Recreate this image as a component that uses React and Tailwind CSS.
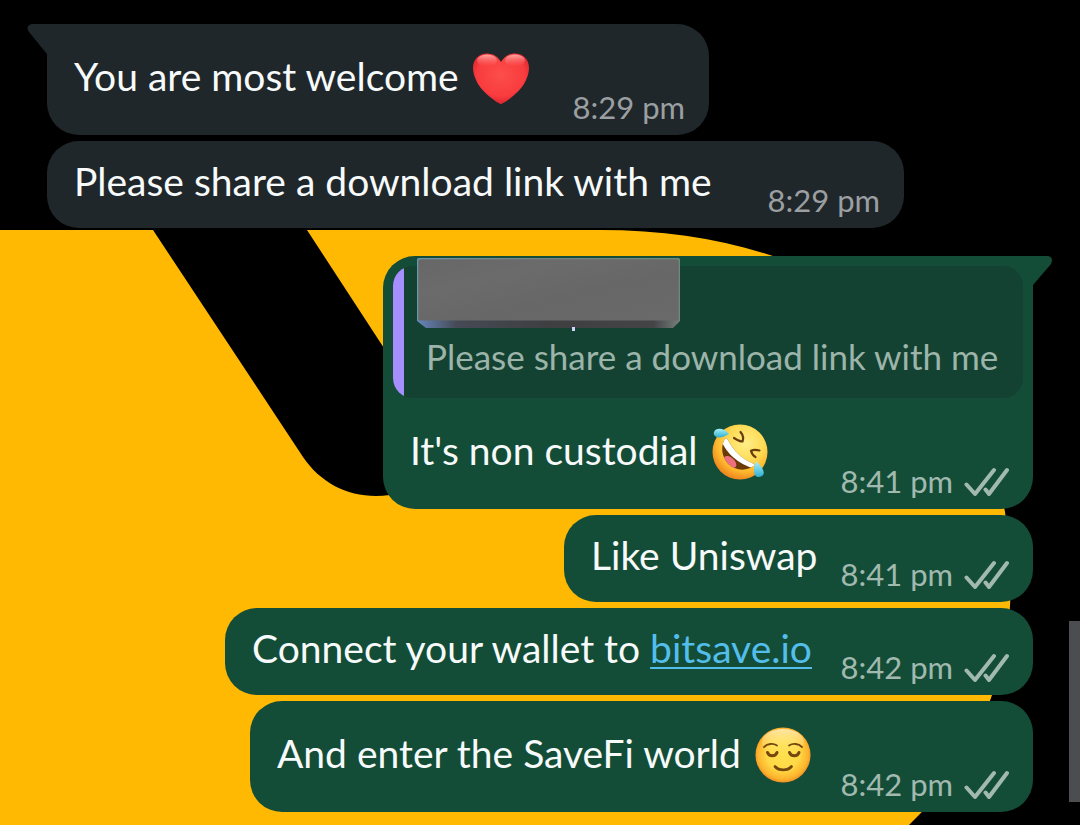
import React from "react";

const messages = [
  { id: 1, text: "You are most welcome", emoji: "heart", time: "8:29 pm", tail: true, width: "w-[662px]" },
  { id: 2, text: "Please share a download link with me", time: "8:29 pm", width: "w-[857px]" },
  {
    id: 3,
    mine: true,
    text: "It's non custodial",
    emoji: "rofl",
    time: "8:41 pm",
    tail: true,
    quote: "Please share a download link with me",
    width: "w-[650px]",
  },
  { id: 4, mine: true, text: "Like Uniswap", time: "8:41 pm", width: "w-[469px]" },
  { id: 5, mine: true, text: "Connect your wallet to", link: "bitsave.io", time: "8:42 pm", width: "w-[808px]" },
  { id: 6, mine: true, text: "And enter the SaveFi world", emoji: "relieved", time: "8:42 pm", width: "w-[783px]" },
];

function Wallpaper() {
  return (
    <svg
      className="absolute inset-0 h-full w-full"
      viewBox="0 0 1080 825"
      preserveAspectRatio="xMinYMin slice"
      aria-hidden="true"
    >
      <path
        fill="#ffb902"
        d="M0 230H153L303 457C320 482 346 496 376 496C420 496 450 470 440 434L307 230H600C665 230 722 239 776 257C900 300 985 400 1005 512C1010 545 1012 577 1010 606C1008 638 1002 668 991 698C975 742 953 783 909 825H0Z"
      />
    </svg>
  );
}

function Heart() {
  return (
    <svg viewBox="0 0 56 56" className="size-14 shrink-0" role="img" aria-label="red heart">
      <defs>
        <radialGradient id="heartFill" cx="50%" cy="42%" r="60%">
          <stop offset="0" stopColor="#fc4e4c" />
          <stop offset="0.7" stopColor="#f93c3e" />
          <stop offset="1" stopColor="#d9222e" />
        </radialGradient>
        <linearGradient id="heartShine" x1="0" y1="0" x2="0" y2="1">
          <stop offset="0" stopColor="#ffb5b0" stopOpacity="0.9" />
          <stop offset="1" stopColor="#ff6a68" stopOpacity="0" />
        </linearGradient>
      </defs>
      <path
        d="M28 54C26 54 11 44 5 34C2 29 0 23 0 18C0 9 6 3.500 14 3.500C21 3.500 25 7 28 12C31 7 35 3.500 42 3.500C50 3.500 56 9 56 18C56 23 54 29 51 34C45 44 30 54 28 54Z"
        fill="url(#heartFill)"
      />
      <ellipse cx="14" cy="10.500" rx="10" ry="6" fill="url(#heartShine)" />
      <ellipse cx="42" cy="10.500" rx="10" ry="6" fill="url(#heartShine)" />
    </svg>
  );
}

function Rofl() {
  return (
    <svg viewBox="0 0 56 56" className="size-14 shrink-0" role="img" aria-label="rolling on the floor laughing">
      <defs>
        <radialGradient id="roflFace" cx="60%" cy="34%" r="66%">
          <stop offset="0" stopColor="#ffee88" />
          <stop offset="0.5" stopColor="#ffdb55" />
          <stop offset="0.8" stopColor="#fdb52c" />
          <stop offset="1" stopColor="#f08a20" />
        </radialGradient>
        <linearGradient id="tear" x1="0" y1="0" x2="0" y2="1">
          <stop offset="0" stopColor="#a4f2fa" />
          <stop offset="1" stopColor="#31aed0" />
        </linearGradient>
        <clipPath id="roflMouth">
          <path d="M13 15C8 23 10 34 17 40.500C24 47 35 47.500 43 41C41 39 37 38 34 36C26 31 20 24 16 16C15 14.500 14 14 13 15Z" />
        </clipPath>
      </defs>
      <circle cx="28" cy="28" r="27.5" fill="url(#roflFace)" />
      <g clipPath="url(#roflMouth)">
        <rect width="56" height="56" fill="#6b3a08" />
        <ellipse cx="18" cy="38" rx="7.500" ry="4.500" transform="rotate(42 18 38)" fill="#ee6f80" />
        <path d="M12 13C17 26 28 37 44 41" fill="none" stroke="#fff" strokeWidth="8" />
      </g>
      <path d="M28.500 8C31 11 31.500 15 30.500 17.500C27.500 17.500 25 16 22 14" fill="none" stroke="#6b3d0c" strokeWidth="2.200" strokeLinecap="round" strokeLinejoin="round" />
      <path d="M47.500 26.500C44 25.500 41.500 25.500 39 26.700C39.500 29 41 31.500 43.500 33" fill="none" stroke="#6b3d0c" strokeWidth="2.200" strokeLinecap="round" strokeLinejoin="round" />
      <path d="M17 10C13 4.500 5 3 2.500 7C-0.500 12 6 17 17 10Z" fill="url(#tear)" />
      <path d="M44 37.500C50 42 55 50 49 52.500C42 55 40 47 44 37.500Z" fill="url(#tear)" />
    </svg>
  );
}

function Relieved() {
  return (
    <svg viewBox="0 0 56 56" className="size-14 shrink-0" role="img" aria-label="relieved face">
      <defs>
        <radialGradient id="relievedFace" cx="50%" cy="48%" r="54%">
          <stop offset="0" stopColor="#ffe04f" />
          <stop offset="0.55" stopColor="#ffd945" />
          <stop offset="0.85" stopColor="#fcb32d" />
          <stop offset="1" stopColor="#ee8421" />
        </radialGradient>
        <linearGradient id="relievedShine" x1="0" y1="0" x2="0" y2="1">
          <stop offset="0" stopColor="#fff3c4" stopOpacity="0.8" />
          <stop offset="1" stopColor="#ffe970" stopOpacity="0" />
        </linearGradient>
      </defs>
      <circle cx="28" cy="28" r="27.5" fill="url(#relievedFace)" />
      <ellipse cx="28" cy="15" rx="21" ry="13" fill="url(#relievedShine)" />
      <g fill="none" stroke="#75470f" strokeLinecap="round">
        <path d="M9 20C12.500 16.500 18 16 22 18.500M34 18.500C38 16 43.500 16.500 47 20" strokeWidth="1.800" />
        <path d="M12.500 25.500C14 29.800 20.500 29.800 22 25.500M34.500 25.500C36 29.800 42.500 29.800 44 25.500" strokeWidth="3" />
        <path d="M20 39.500C24 44 32.500 44 36.500 39.500" strokeWidth="2.800" />
      </g>
    </svg>
  );
}

const emojis = { heart: Heart, rofl: Rofl, relieved: Relieved };

function Ticks() {
  return (
    <svg viewBox="0 0 46 31" className="ml-[10px] h-[31px] w-[46px] shrink-0" fill="none" stroke="#a1b9af" strokeWidth="4" strokeLinecap="round" strokeLinejoin="round" role="img" aria-label="delivered">
      <path d="M3.500 18.500L12 28L31 4M22.500 23.500L26 28L44 4" />
    </svg>
  );
}

function Tail({ mine }) {
  return mine ? (
    <svg viewBox="0 0 20 30" className="absolute top-0 left-full h-[30px] w-5" aria-hidden="true">
      <path d="M-1 0H14C19 0 20 4 18 8L0 29H-1Z" fill="#144d37" />
    </svg>
  ) : (
    <svg viewBox="0 0 20 30" className="absolute top-0 right-full h-[30px] w-5" aria-hidden="true">
      <path d="M21 0H6C1 0 -1 4 2 8L20 30H21Z" fill="#20272b" />
    </svg>
  );
}

// Slab that hides the sender name of the quoted message
function NameCover() {
  return (
    <svg viewBox="0 0 263 73" className="h-[73px] w-[263px]" aria-hidden="true">
      <defs>
        <linearGradient id="slabEdge" x1="0" y1="0" x2="1" y2="0">
          <stop offset="0" stopColor="#6787bd" />
          <stop offset="0.15" stopColor="#454a55" />
          <stop offset="0.5" stopColor="#3f3f41" />
          <stop offset="0.9" stopColor="#444446" />
          <stop offset="1" stopColor="#77807c" />
        </linearGradient>
        <linearGradient id="slabRim" x1="0" y1="0" x2="1" y2="0">
          <stop offset="0" stopColor="#6b95a8" />
          <stop offset="0.5" stopColor="#79807e" />
          <stop offset="1" stopColor="#6c8b7d" />
        </linearGradient>
        <linearGradient id="slabFace" x1="0" y1="0" x2="1" y2="1">
          <stop offset="0" stopColor="#676768" />
          <stop offset="0.3" stopColor="#6b6b6c" />
          <stop offset="0.6" stopColor="#676768" />
          <stop offset="1" stopColor="#6a6a6b" />
        </linearGradient>
      </defs>
      <path d="M0 60H263V63L256 70H9L0 63Z" fill="url(#slabEdge)" />
      <rect x="0.5" y="0.500" width="262" height="62" rx="2" fill="url(#slabFace)" />
      <path d="M0.500 62V3Q0.500 0.500 3 0.500H260Q262.500 0.500 262.500 3V62" fill="none" stroke="url(#slabRim)" strokeWidth="1.500" />
      <rect x="155" y="69" width="3" height="4" fill="#d3d2ff" />
    </svg>
  );
}

function Quote({ text }) {
  return (
    <blockquote className="mx-[10px] flex h-[132px] overflow-hidden rounded-[20px] bg-[#144232]">
      <div className="w-[11px] shrink-0 bg-[#a58fff]" />
      <p className="mt-auto mb-5 ml-[22px] text-[35px] leading-[44px] whitespace-nowrap text-[#9cb4a9]">{text}</p>
    </blockquote>
  );
}

function Message({ msg }) {
  const Emoji = emojis[msg.emoji];
  const color = msg.mine ? "bg-[#144d37]" : "bg-[#20272b]";
  const side = msg.mine ? "self-end" : "self-start";
  const corner = msg.tail ? (msg.mine ? "rounded-tr-none" : "rounded-tl-none") : "";

  return (
    <article className={`relative max-w-full rounded-[32px] ${color} ${side} ${corner} ${msg.width} ${msg.quote ? "mt-[22px] pt-[10px]" : ""}`}>
      {msg.tail && <Tail mine={msg.mine} />}
      {msg.quote && <Quote text={msg.quote} />}
      {msg.quote && (
        <div className="absolute top-[2px] left-[34px]">
          <NameCover />
        </div>
      )}
      <div className={`flex justify-between pr-6 pl-[27px] ${Emoji ? "h-[111px]" : "h-[87px]"}`}>
        <p className={`flex items-center gap-[14px] text-[39px] leading-[52px] whitespace-nowrap text-[#f7fafa] ${Emoji ? "pb-1" : "pb-2"}`}>
          <span className={Emoji ? "pb-1" : ""}>
            {msg.text}
            {msg.link && (
              <>
                {" "}
                <a href="https://bitsave.io" className="text-[#53bdeb] underline decoration-2 underline-offset-4">
                  {msg.link}
                </a>
              </>
            )}
          </span>
          {Emoji && <Emoji />}
        </p>
        <div className={`flex items-center self-end pb-2 text-[31px] leading-10 whitespace-nowrap ${msg.mine ? "text-[#a1b9af]" : "text-[#9b9fa1]"}`}>
          <time>{msg.time}</time>
          {msg.mine && <Ticks />}
        </div>
      </div>
    </article>
  );
}

export default function App() {
  return (
    <main className="relative min-h-screen overflow-hidden bg-black font-['Lato',sans-serif]">
      <Wallpaper />
      <section className="relative flex flex-col gap-[6px] pt-6 pr-[47px] pb-3 pl-[47px]">
        {messages.map(msg => (
          <Message key={msg.id} msg={msg} />
        ))}
      </section>
      {/* scroll thumb */}
      <div className="absolute top-[621px] right-0 h-[181px] w-[11px] bg-[#4b4d50]" />
    </main>
  );
}
